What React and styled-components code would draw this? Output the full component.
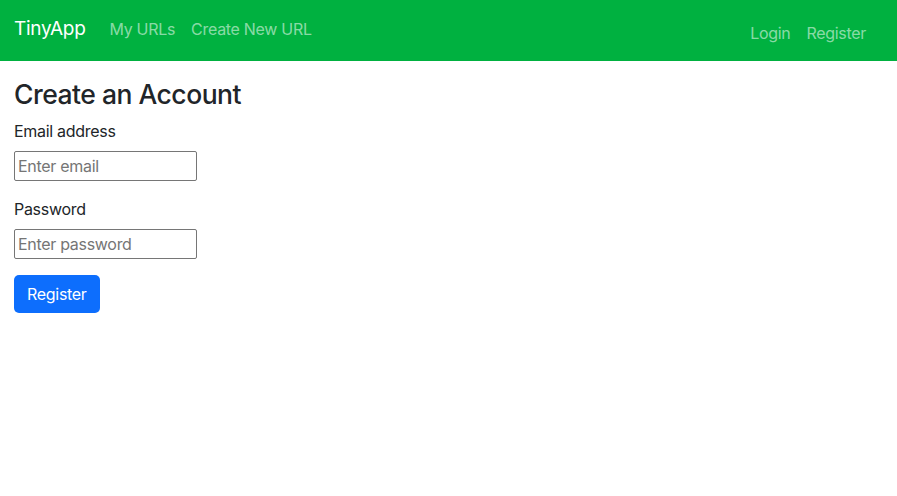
import React from 'react';
import styled, { createGlobalStyle } from 'styled-components';

const GlobalStyle = createGlobalStyle`
  body {
    margin: 0;
    font-family: Inter, "Liberation Sans", sans-serif;
    color: #212529;
    background: #fff;
    letter-spacing: -0.3px;
  }
  * { box-sizing: border-box; }
`;

const Nav = styled.nav`
  display: flex;
  justify-content: space-between;
  align-items: flex-start;
  height: 61px;
  background: #00b140;
  padding: 0 31px 0 14px;
`;

const NavGroup = styled.div`
  display: flex;
  align-items: center;
  gap: ${({ gap }) => gap || 16}px;
  padding-top: ${({ top }) => top || 17}px;
`;

const Brand = styled.a`
  color: #fff;
  font-size: 19px;
  text-decoration: none;
  margin-right: 8px;
`;

const NavLink = styled.a`
  color: rgba(255, 255, 255, 0.55);
  font-size: 16px;
  text-decoration: none;
`;

const Main = styled.main`
  padding: 18px 14px;
`;

const Title = styled.h2`
  font-size: 26.5px;
  font-weight: 500;
  letter-spacing: -0.5px;
  margin: 0 0 10px;
  line-height: 1.2;
`;

const Form = styled.form`
  display: flex;
  flex-direction: column;
  align-items: flex-start;
`;

const Label = styled.label`
  font-size: 16px;
  margin-bottom: 10px;
`;

const Input = styled.input`
  width: 183px;
  height: 30px;
  border: 1px solid #767676;
  border-radius: 2px;
  padding: 0 3px;
  font-size: 16px;
  font-family: inherit;
  letter-spacing: -0.3px;
  margin-bottom: 18px;
  &::placeholder { color: #757575; }
`;

const Button = styled.button`
  background: #0d6efd;
  color: #fff;
  border: none;
  border-radius: 5px;
  padding: 0 13px;
  height: 38px;
  font-size: 16px;
  font-family: inherit;
  letter-spacing: -0.3px;
  margin-top: -2px;
`;

export default function App() {
  return (
    <>
      <GlobalStyle />
      <Nav>
        <NavGroup>
          <Brand href="#">TinyApp</Brand>
          <NavLink href="#">My URLs</NavLink>
          <NavLink href="#">Create New URL</NavLink>
        </NavGroup>
        <NavGroup top={23} gap={16}>
          <NavLink href="#">Login</NavLink>
          <NavLink href="#">Register</NavLink>
        </NavGroup>
      </Nav>
      <Main>
        <Title>Create an Account</Title>
        <Form onSubmit={(e) => e.preventDefault()}>
          <Label htmlFor="email">Email address</Label>
          <Input id="email" type="email" placeholder="Enter email" />
          <Label htmlFor="password">Password</Label>
          <Input id="password" type="password" placeholder="Enter password" />
          <Button type="submit">Register</Button>
        </Form>
      </Main>
    </>
  );
}
